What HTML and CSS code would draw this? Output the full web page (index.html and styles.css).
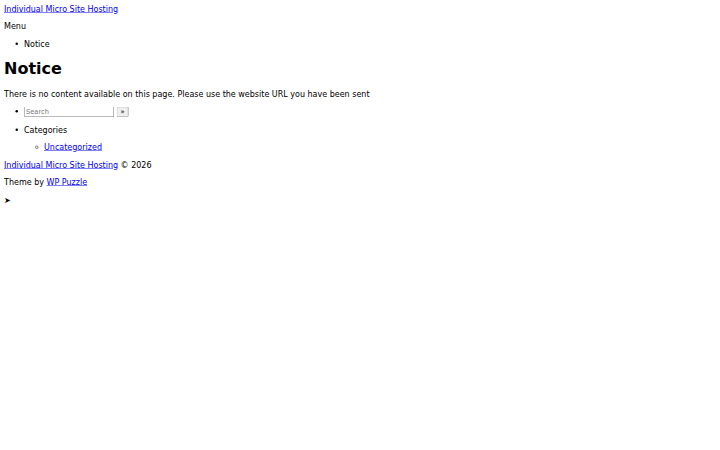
FILE: index.html
```
<!DOCTYPE html>
<html lang="en">
<head>
<meta charset="utf-8">
<title>Notice – Individual Micro Site Hosting</title>
<link rel="stylesheet" href="styles.css">
</head>
<body>
<div class="frame">
<div class="page">
<div class="site-title"><a href="#">Individual Micro Site Hosting</a></div>
<p>Menu</p>
<ul class="list">
  <li>Notice</li>
</ul>
<h1 class="page-title">Notice</h1>
<p>There is no content available on this page. Please use the website URL you have been sent</p>
<ul class="list">
  <li><form class="search"><input class="search-input" type="text" placeholder="Search"> <button class="search-btn" type="button">»</button></form></li>
</ul>
<ul class="list">
  <li>Categories
    <ul class="list sub">
      <li><a href="#">Uncategorized</a></li>
    </ul>
  </li>
</ul>
<p><a href="#">Individual Micro Site Hosting</a> © 2026</p>
<p>Theme by <a href="#">WP Puzzle</a></p>
<p>➤</p>
</div>
</div>
</body>
</html>
```
FILE: styles.css
```
html { background: #fff; }
body { margin: 0; }
.frame {
  width: 720px;
  height: 450px;
  overflow: hidden;
}
.page {
  width: 1424px;
  padding: 8px;
  transform: scale(0.5);
  transform-origin: 0 0;
  font-family: "DejaVu Sans", sans-serif;
  font-size: 16px;
  color: #000;
}
a { color: #0000ee; }
p { margin: 16px 0; }
.site-title { margin: 0; }
.list { margin: 16px 0; padding-left: 40px; }
.list.sub { list-style-type: circle; }
.page-title { font-size: 32px; font-weight: bold; margin: 21.44px 0; }
.search { margin: 0; }
.search-input {
  width: 172px;
  font: 13.33px "DejaVu Sans", sans-serif;
}
.search-btn {
  font: 13.33px "DejaVu Sans", sans-serif;
}
```
